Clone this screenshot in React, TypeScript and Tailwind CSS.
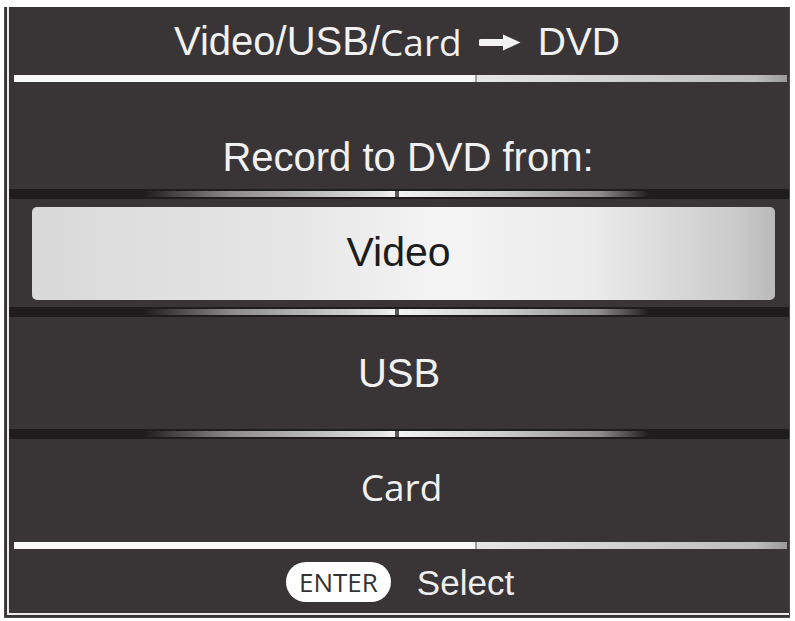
import React from 'react';

const ARIAL = "font-[family-name:Liberation_Sans,Arial,sans-serif]";
const OPEN = "font-[family-name:Open_Sans,Noto_Sans,sans-serif]";

const Separator: React.FC = () => (
  <div className="h-[10px] bg-[#1f1c1d] flex items-center">
    <div className="ml-[135px] w-[505px] h-[6px] flex">
      <div className="flex-1 bg-[linear-gradient(to_right,rgba(60,58,58,0),#8d8b8c_35%,#e4e4e4_95%,#f6f6f6)]" />
      <div className="w-[4px] bg-[#5a5858]" />
      <div className="flex-1 bg-[linear-gradient(to_right,#f2f2f2,#cfcfcf_40%,#8f8d8e_80%,rgba(60,58,58,0))]" />
    </div>
  </div>
);

const WhiteLine: React.FC = () => (
  <div className="ml-[5px] mr-[2px] h-[7px] flex">
    <div className="w-[461px] bg-[#f7f7f7]" />
    <div className="w-[2px] bg-[#9c9c9c]" />
    <div className="flex-1 bg-[linear-gradient(to_right,#e6e6e6,#cfcfcf_50%,#bdbdbd_90%,#9a9a9a)]" />
  </div>
);

const Arrow: React.FC = () => (
  <svg width="42" height="17" viewBox="0 0 42 17" className="mx-[17px] mt-[2px]">
    <path d="M1.5 5 H24 V0.5 L41.5 8.5 L24 16.5 V12 H1.5 Q0 12 0 10.5 V6.5 Q0 5 1.5 5 Z" fill="#f2f2f2" />
  </svg>
);

const App: React.FC = () => {
  return (
    <div className="w-[795px] h-[621px] bg-white pt-[7px] pl-[4px]">
      <div className="w-[786px] h-[611px] bg-[#393536] border border-[#4d4a4b] border-t-0 flex flex-col pl-[2px] pb-[2px]">
        <div className="flex-1 border-l-2 border-b-2 border-[#ececec] flex flex-col">
          {/* title */}
          <div className="h-[68px] flex items-center justify-center pr-[4px] text-[#f1f1f1]">
            <span className={`${ARIAL} text-[40px] leading-none`}>Video/USB/</span>
            <span className={`${OPEN} text-[37px] leading-none`}>Card</span>
            <Arrow />
            <span className={`${ARIAL} text-[39px] leading-none`}>DVD</span>
          </div>
          <WhiteLine />

          <div className={`h-[107px] flex items-end justify-center pl-[18px] pb-[12px] ${ARIAL} text-[40px] leading-none text-[#f1f1f1]`}>
            Record to DVD from:
          </div>

          <Separator />
          <div className="h-[108px] flex items-center">
            <div className={`ml-[23px] mr-[14px] flex-1 h-[93px] pr-[10px] rounded-[5px] flex items-center justify-center bg-[linear-gradient(to_right,#d9d9d9,#e6e6e6_35%,#f4f4f4_55%,#ececec_75%,#cacaca_95%,#b9b9b9)] ${ARIAL} text-[41px] text-[#1c1c1c]`}>
              Video
            </div>
          </div>
          <Separator />

          <div className={`h-[112px] flex items-center justify-center ${ARIAL} text-[40px] text-[#f1f1f1]`}>
            USB
          </div>
          <Separator />

          <div className={`h-[103px] flex items-center justify-center pl-[5px] pb-[8px] ${OPEN} text-[37px] text-[#f1f1f1]`}>
            Card
          </div>

          <WhiteLine />
          <div className="flex-1 flex items-center justify-center gap-[26px] pl-[2px] pt-[2px]">
            <span className={`w-[105px] h-[40px] rounded-full bg-white flex items-center justify-center ${OPEN} text-[26px] text-[#333] leading-none`}>
              ENTER
            </span>
            <span className={`${ARIAL} text-[35px] leading-none text-[#efefef]`}>Select</span>
          </div>
        </div>
      </div>
    </div>
  );
};

export default App;
